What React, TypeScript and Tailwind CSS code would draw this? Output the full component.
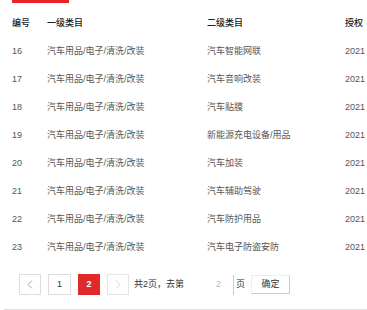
import React from "react";

const rows = [
  ["16", "汽车用品/电子/清洗/改装", "汽车智能网联"],
  ["17", "汽车用品/电子/清洗/改装", "汽车音响改装"],
  ["18", "汽车用品/电子/清洗/改装", "汽车贴膜"],
  ["19", "汽车用品/电子/清洗/改装", "新能源充电设备/用品"],
  ["20", "汽车用品/电子/清洗/改装", "汽车加装"],
  ["21", "汽车用品/电子/清洗/改装", "汽车辅助驾驶"],
  ["22", "汽车用品/电子/清洗/改装", "汽车防护用品"],
  ["23", "汽车用品/电子/清洗/改装", "汽车电子防盗安防"],
];

export default function App() {
  return (
    <div
      className="w-[367px] h-[310px] overflow-hidden bg-white relative"
      style={{ fontFamily: '"Liberation Sans", "Noto Sans CJK SC", sans-serif' }}
    >
      <div className="ml-[12px] w-[57px] h-[3px] bg-[#e8232a]" />
      <div className="mt-[7px] pl-[12px] text-[9px]">
        <div className="flex h-[28px] items-center text-[#222] font-medium whitespace-nowrap">
          <div className="w-[35px] shrink-0">编号</div>
          <div className="w-[160px] shrink-0">一级类目</div>
          <div className="w-[138px] shrink-0">二级类目</div>
          <div className="shrink-0">授权</div>
        </div>
        {rows.map((r) => (
          <div key={r[0]} className="flex h-[28px] items-center text-[#555] whitespace-nowrap">
            <div className="w-[35px] shrink-0">{r[0]}</div>
            <div className="w-[160px] shrink-0">{r[1]}</div>
            <div className="w-[138px] shrink-0">{r[2]}</div>
            <div className="shrink-0">2021</div>
          </div>
        ))}
      </div>
      <div className="mt-[12px] pl-[19px] flex items-center h-[21px] text-[9px] whitespace-nowrap">
        <div className="w-[22px] h-[21px] border border-[#ddd] flex items-center justify-center">
          <svg width="6" height="9" viewBox="0 0 6 9" fill="none">
            <path d="M5 0.5 L1 4.5 L5 8.5" stroke="#999" strokeWidth="0.9" />
          </svg>
        </div>
        <div className="ml-[7px] w-[23px] h-[21px] border border-[#ddd] flex items-center justify-center text-[#333]">
          1
        </div>
        <div className="ml-[7px] w-[22px] h-[21px] bg-[#e02a2a] flex items-center justify-center text-white font-bold">
          2
        </div>
        <div className="ml-[7px] w-[22px] h-[21px] border border-[#e5e5e5] flex items-center justify-center">
          <svg width="6" height="9" viewBox="0 0 6 9" fill="none">
            <path d="M1 0.5 L5 4.5 L1 8.5" stroke="#ccc" strokeWidth="0.9" />
          </svg>
        </div>
        <span className="ml-[5px] text-[#333]">共2页，去第</span>
        <div className="ml-[16px] w-[34px] h-[20px] border-r border-[#ccc] flex items-center pl-[16px] text-[#bbb]">
          2
        </div>
        <span className="ml-[2px] text-[#333]">页</span>
        <div className="ml-[6px] w-[39px] h-[19px] border-r border-b border-[#ccc] border-l border-l-[#eee] border-t border-t-[#eee] flex items-center justify-center text-[#333]">
          确定
        </div>
      </div>
      <div className="absolute left-[4px] right-0 top-[309px] h-px bg-[#ddd]" />
    </div>
  );
}
